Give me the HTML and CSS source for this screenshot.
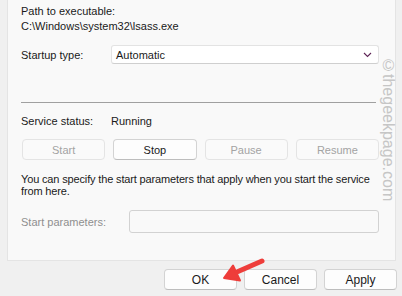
FILE: index.html
```html
<!DOCTYPE html>
<html lang="en">
<head>
  <meta charset="UTF-8" />
  <meta name="viewport" content="width=device-width,initial-scale=1.0" />
  <title>Service properties</title>
  <link rel="stylesheet" href="styles.css">
</head>
<body>
  <div class="dialog">
    <div class="panel">
      <div class="field-label">Path to executable:</div>
      <div class="field-value">C:\Windows\system32\lsass.exe</div>

      <div class="row startup-row">
        <span class="row-label">Startup type:</span>
        <div class="select">
          <span>Automatic</span>
          <svg class="chevron" width="9" height="6" viewBox="0 0 9 6">
            <path d="M1 1l3.5 3.5L8 1" fill="none" stroke="#5e2455" stroke-width="1.1"/>
          </svg>
        </div>
      </div>

      <div class="divider"></div>

      <div class="row status-row">
        <span class="row-label">Service status:</span>
        <span>Running</span>
      </div>

      <div class="control-buttons">
        <button class="btn" disabled>Start</button>
        <button class="btn">Stop</button>
        <button class="btn" disabled>Pause</button>
        <button class="btn" disabled>Resume</button>
      </div>

      <p class="hint">You can specify the start parameters that apply when you start the service from here.</p>

      <div class="row params-row">
        <span class="row-label params-label">Start parameters:</span>
        <div class="text-input"></div>
      </div>
    </div>

    <div class="footer">
      <button class="btn footer-btn">OK</button>
      <button class="btn footer-btn">Cancel</button>
      <button class="btn footer-btn">Apply</button>
    </div>

    <!-- overlays -->
    <div class="watermark">©thegeekpage.com</div>
    <svg class="arrow" width="402" height="296" viewBox="0 0 402 296">
      <g fill="#ee3d3a" stroke="#ee3d3a" stroke-linecap="round" stroke-linejoin="round">
        <path d="M262 261L238 271.5" stroke-width="5" fill="none"/>
        <path d="M224 278L233 265.5L240 280.5Z" stroke-width="2"/>
      </g>
    </svg>
  </div>
</body>
</html>
```

FILE: styles.css
```css
html,body{margin:0;width:402px;height:296px;overflow:hidden;background:#f0f0f0}
* { box-sizing: border-box; }

.dialog {
  position: relative;
  width: 402px;
  height: 296px;
  padding: 0 6px 0 7px;
  display: flex;
  flex-direction: column;
  font-family: "Liberation Sans", Arial, sans-serif;
  font-size: 11px;
  color: #1a1a1a;
}

/* Tab page */
.panel {
  height: 261px;
  background: #f9f9f9;
  border: 1px solid #e4e4e4;
  border-top: none;
  padding: 4px 16px 0 13px;
}
.field-label,
.field-value {
  line-height: 15px;
}

.row {
  display: flex;
  align-items: center;
}
.row-label {
  width: 90px;
  flex-shrink: 0;
}

.startup-row {
  margin-top: 11px;
}
.select {
  flex: 1;
  height: 19px;
  background: #fff;
  border: 1px solid #e3e3e3;
  border-bottom-color: #cfcfcf;
  border-radius: 3px;
  display: flex;
  align-items: center;
  justify-content: space-between;
  padding: 0 6px 0 4px;
}

.divider {
  height: 1px;
  background: #a0a0a0;
  margin: 38px 3px 0 0;
}

.status-row {
  margin-top: 11px;
  line-height: 15px;
}

.control-buttons {
  display: grid;
  grid-template-columns: repeat(4, 1fr);
  gap: 8px;
  margin: 10px 0 0 1px;
}
.btn {
  height: 21px;
  padding: 0;
  font: inherit;
  color: #1a1a1a;
  background: #fdfdfd;
  border: 1px solid #d3d3d3;
  border-bottom-color: #bdbdbd;
  border-radius: 4px;
}
.btn:disabled {
  color: #a3a3a3;
  background: #fafafa;
  border-color: #e4e4e4;
}

.hint {
  margin: 13px 0 0;
  line-height: 12px;
  letter-spacing: -0.15px;
}

.params-row {
  margin-top: 13px;
}
.params-label {
  width: 108px;
  color: #8f8f8f;
}
.text-input {
  flex: 1;
  height: 23px;
  border: 1px solid #d2d2d2;
  border-radius: 3px;
}

/* OK / Cancel / Apply */
.footer {
  display: flex;
  justify-content: flex-end;
  gap: 7px;
  margin: 8px -1px 0 0;
}
.footer-btn {
  width: 73px;
  font-size: 12px;
}

.watermark {
  position: absolute;
  left: 380px;
  top: 57px;
  writing-mode: vertical-rl;
  font-size: 16px;
  line-height: 17px;
  color: #c6c6c6;
}
.arrow {
  position: absolute;
  left: 0;
  top: 0;
  pointer-events: none;
}
```
